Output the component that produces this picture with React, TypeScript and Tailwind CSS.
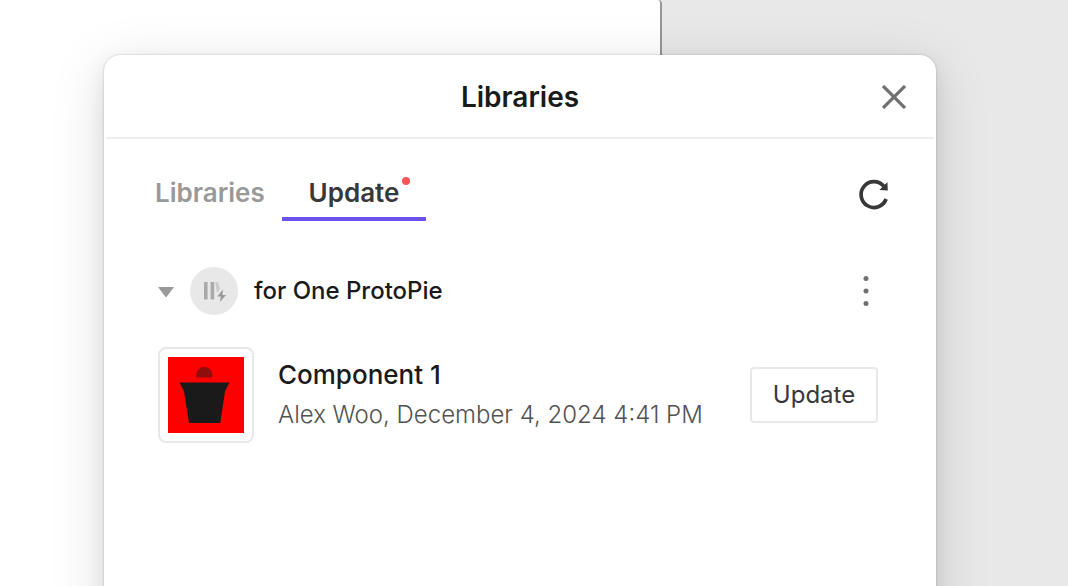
import React, { useState } from 'react';

type Tab = 'libraries' | 'update';

interface LibraryItem {
    id: number;
    name: string;
    meta: string;
}

const items: LibraryItem[] = [
    { id: 1, name: 'Component 1', meta: 'Alex Woo, December 4, 2024 4:41 PM' },
];

const CloseIcon = () => (
    <svg width="24" height="24" viewBox="0 0 24 24" fill="none" stroke="#707070" strokeWidth="3.2">
        <path d="M1 1L23 23M23 1L1 23" />
    </svg>
);

const RefreshIcon = () => (
    <svg width="32" height="32" viewBox="0 0 32 32" fill="none">
        <path d="M28.1 20A12.9 12.9 0 1 1 25.8 7.2" stroke="#383838" strokeWidth="3.7" />
        <path d="M29.4 3L29.8 11.6L21.4 11L23.4 9L27 5.6Z" fill="#383838" />
    </svg>
);

const MoreIcon = () => (
    <svg width="6" height="30" viewBox="0 0 6 30" fill="#707070">
        <circle cx="3" cy="2.5" r="2.5" />
        <circle cx="3" cy="15" r="2.5" />
        <circle cx="3" cy="27.5" r="2.5" />
    </svg>
);

const LibraryIcon = () => (
    <svg width="24" height="22" viewBox="0 0 24 22">
        <path d="M2 2H5.6V19.6H2ZM8.6 2H12.2V19.6H8.6Z" fill="#a9a9a9" />
        <path d="M13.2 2.4L16 1.8L18 9L15 13Z" fill="#cbcbcb" />
        <path d="M21 9.4L15.2 16.6H18.8L18 22L24 15H20.4Z" fill="#999999" />
    </svg>
);

const Thumbnail = () => (
    <svg width="76" height="76" viewBox="0 0 76 76">
        <rect width="76" height="76" fill="#ff0000" />
        <path d="M28.3 20.5V18A8 8 0 0 1 44.3 18V20.5Z" fill="#8f0d0d" />
        <path d="M11.5 25.5H61.5L57 34.5L52.3 66H21L16 34.5Z" fill="#1a1a1a" />
    </svg>
);

const App: React.FC = () => {
    const [tab, setTab] = useState<Tab>('update');
    const [open, setOpen] = useState(true);

    return (
        <div className="relative h-screen overflow-hidden bg-white font-['Inter',sans-serif]">
            {/* canvas behind the dialog */}
            <div className="absolute inset-0 flex bg-[#e8e8e8]">
                <div className="w-[62%] rounded-tr-sm border-r-2 border-[#969696] bg-white" />
            </div>

            <main className="relative pt-[55px] pr-[132px] pl-[104px]">
                <section
                    role="dialog"
                    aria-labelledby="dialog-title"
                    className="min-h-[800px] rounded-2xl bg-white px-[2px] shadow-[0_0_2px_rgba(0,0,0,0.25),0_8px_20px_rgba(0,0,0,0.09),0_12px_56px_rgba(0,0,0,0.13)]"
                >
                    <header className="relative flex h-[84px] items-center justify-center border-b-2 border-[#eeeeee] pt-[2px]">
                        <h1 id="dialog-title" className="text-[28px] leading-8 font-semibold text-[#1a1a1a]">Libraries</h1>
                        <button type="button" aria-label="Close" className="absolute top-[30px] right-[28px]">
                            <CloseIcon />
                        </button>
                    </header>

                    <div className="pr-[44px] pl-[49px]">
                        <div className="flex items-start justify-between pt-8">
                            <div role="tablist" className="flex">
                                <button
                                    type="button"
                                    role="tab"
                                    aria-selected={tab === 'libraries'}
                                    onClick={() => setTab('libraries')}
                                    className="h-[50px] w-[127px] pb-[6px] text-left text-[26px] leading-8 font-semibold text-[#999999]"
                                >
                                    Libraries
                                </button>
                                <button
                                    type="button"
                                    role="tab"
                                    aria-selected={tab === 'update'}
                                    onClick={() => setTab('update')}
                                    className="relative h-[50px] w-[144px] border-b-4 border-[#6b52f0] pb-[2px] text-[26px] leading-8 font-semibold text-[#383838]"
                                >
                                    Update
                                    <span className="absolute top-[6px] right-4 size-2 rounded-full bg-[#ff5358]" />
                                </button>
                            </div>
                            <button type="button" aria-label="Refresh" className="mt-2">
                                <RefreshIcon />
                            </button>
                        </div>

                        <div className="mt-[46px] flex items-center justify-between pr-[21px]">
                            <button
                                type="button"
                                aria-expanded={open}
                                onClick={() => setOpen(!open)}
                                className="flex items-center pl-[3px]"
                            >
                                <svg width="16" height="12" viewBox="0 0 16 12" fill="#999999">
                                    <path d="M0 2H16L8 12.6Z" />
                                </svg>
                                <span className="ml-4 flex size-12 items-center justify-center rounded-full bg-[#e8e8e8]">
                                    <LibraryIcon />
                                </span>
                                <span className="ml-4 text-2xl font-medium text-[#1a1a1a]">for One ProtoPie</span>
                            </button>
                            <button type="button" aria-label="More">
                                <MoreIcon />
                            </button>
                        </div>

                        {open && (
                            <ul className="mt-8">
                                {items.map(item => (
                                    <li key={item.id} className="flex items-center pr-3 pl-[3px]">
                                        <div className="rounded-lg border-2 border-[#e8e8e8] p-2">
                                            <Thumbnail />
                                        </div>
                                        <div className="ml-6 flex-1 whitespace-nowrap">
                                            <h2 className="text-[26px] leading-10 font-medium text-[#1a1a1a]">{item.name}</h2>
                                            <p className="text-2xl leading-10 font-light text-[#525252]">{item.meta}</p>
                                        </div>
                                        <button
                                            type="button"
                                            className="h-14 w-32 rounded-sm border-2 border-[#e8e8e8] text-2xl text-[#383838]"
                                        >
                                            Update
                                        </button>
                                    </li>
                                ))}
                            </ul>
                        )}
                    </div>
                </section>
            </main>
        </div>
    );
};

export default App;
